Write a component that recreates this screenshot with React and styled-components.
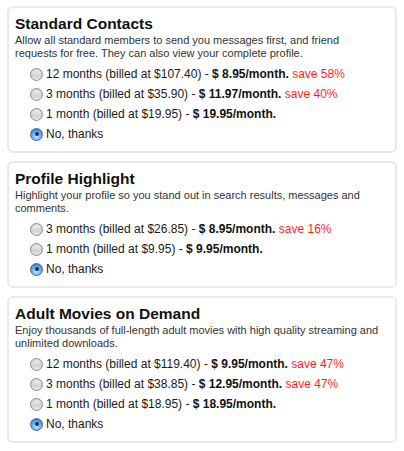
import styled, { createGlobalStyle } from 'styled-components';

const GlobalStyle = createGlobalStyle`
  body {
    margin: 0;
    background: #ffffff;
    font-family: "Liberation Sans", Arial, Helvetica, sans-serif;
    color: #1a1a1a;
  }
`;

const Page = styled.div`
  display: flex;
  flex-direction: column;
  gap: 8px;
  padding: 6px 7px;
  width: 390px;
`;

const Box = styled.section`
  border: 2px solid #e9e9e9;
  border-radius: 6px;
  padding: 6px 14px 7px 6px;
`;

const Title = styled.h2`
  margin: 0;
  font-size: 15.5px;
  line-height: 20px;
  font-weight: bold;
  color: #111;
`;

const Desc = styled.p`
  margin: 0 0 4px;
  font-size: 11px;
  line-height: 13px;
  color: #333;
`;

const Options = styled.div`
  display: flex;
  flex-direction: column;
  padding-left: 15px;
`;

const Row = styled.label`
  display: flex;
  align-items: center;
  gap: 3px;
  height: 20px;
  font-size: 12px;
  color: #1a1a1a;
  white-space: nowrap;
`;

const Radio = styled.span`
  position: relative;
  flex: none;
  width: 13px;
  height: 13px;
  box-sizing: border-box;
  border-radius: 50%;
  border: 1px solid ${p => (p.$checked ? '#3d6ea8' : '#8d8d8d')};
  background: ${p =>
    p.$checked
      ? 'radial-gradient(circle at 50% 70%, #bfe0ff 0%, #6eb0f0 45%, #2f7bd0 100%)'
      : 'linear-gradient(#f4f4f4, #d2d2d2 60%, #e8e8e8)'};
  box-shadow: inset 0 1px 1px rgba(0, 0, 0, 0.15);

  &::after {
    content: '';
    display: ${p => (p.$checked ? 'block' : 'none')};
    position: absolute;
    left: 50%;
    top: 50%;
    width: 4px;
    height: 4px;
    margin: -2px 0 0 -2px;
    border-radius: 50%;
    background: #1c2f4a;
  }
`;

const Price = styled.b`
  font-weight: bold;
  color: #111;
`;

const Save = styled.span`
  color: #ff1f1f;
`;

const sections = [
  {
    title: 'Standard Contacts',
    desc: 'Allow all standard members to send you messages first, and friend requests for free. They can also view your complete profile.',
    options: [
      ['12 months (billed at $107.40) - ', '$ 8.95/month.', 'save 58%'],
      ['3 months (billed at $35.90) - ', '$ 11.97/month.', 'save 40%'],
      ['1 month (billed at $19.95) - ', '$ 19.95/month.'],
    ],
  },
  {
    title: 'Profile Highlight',
    desc: 'Highlight your profile so you stand out in search results, messages and comments.',
    options: [
      ['3 months (billed at $26.85) - ', '$ 8.95/month.', 'save 16%'],
      ['1 month (billed at $9.95) - ', '$ 9.95/month.'],
    ],
  },
  {
    title: 'Adult Movies on Demand',
    desc: 'Enjoy thousands of full-length adult movies with high quality streaming and unlimited downloads.',
    options: [
      ['12 months (billed at $119.40) - ', '$ 9.95/month.', 'save 47%'],
      ['3 months (billed at $38.85) - ', '$ 12.95/month.', 'save 47%'],
      ['1 month (billed at $18.95) - ', '$ 18.95/month.'],
    ],
  },
];

function Section({ title, desc, options }) {
  return (
    <Box>
      <Title>{title}</Title>
      <Desc>{desc}</Desc>
      <Options>
        {options.map(([label, price, save]) => (
          <Row key={label}>
            <Radio />
            <span>
              {label}
              <Price>{price}</Price>
              {save ? <Save> {save}</Save> : null}
            </span>
          </Row>
        ))}
        <Row>
          <Radio $checked />
          <span>No, thanks</span>
        </Row>
      </Options>
    </Box>
  );
}

export default function App() {
  return (
    <>
      <GlobalStyle />
      <Page>
        {sections.map(s => (
          <Section key={s.title} {...s} />
        ))}
      </Page>
    </>
  );
}
